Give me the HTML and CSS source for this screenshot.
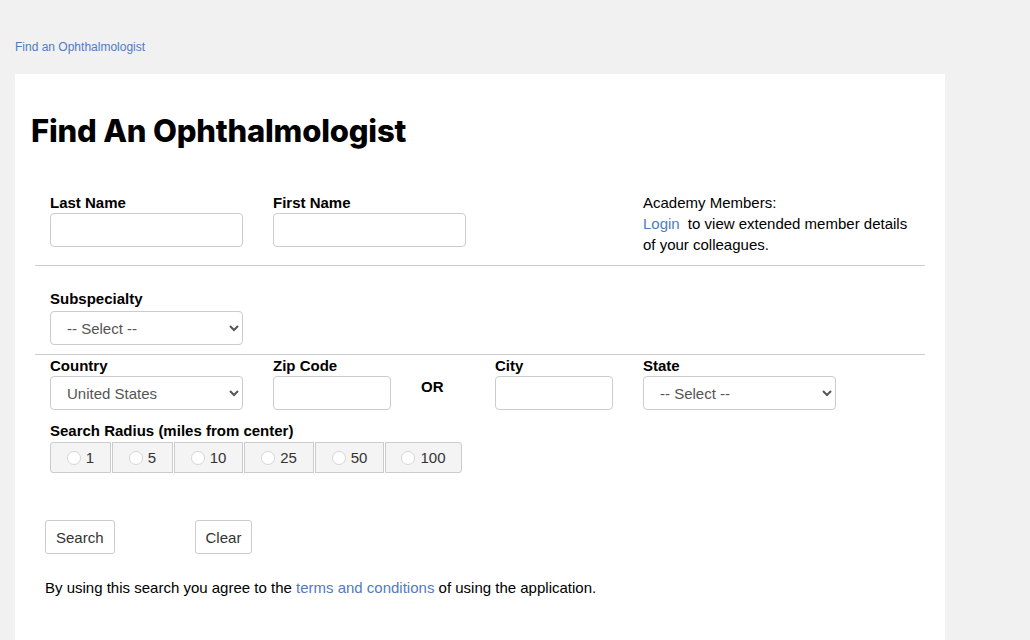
FILE: index.html
```html
<!DOCTYPE html>
<html lang="en">
<head>
    <meta charset="UTF-8">
    <meta name="viewport" content="width=device-width, initial-scale=1.0">
    <title>Find an Ophthalmologist</title>
    <link rel="stylesheet" href="styles.css">
</head>
<body>
    <div class="breadcrumb"><a href="#">Find an Ophthalmologist</a></div>

    <div class="card">
        <h1>Find An Ophthalmologist</h1>

        <form class="search-form">
            <div class="row row-names">
                <div class="field">
                    <label for="last-name">Last Name</label>
                    <input type="text" id="last-name" class="text-input wide">
                </div>
                <div class="field">
                    <label for="first-name">First Name</label>
                    <input type="text" id="first-name" class="text-input wide">
                </div>
                <div class="members">
                    Academy Members:<br>
                    <a href="#" class="login">Login</a> to view extended member details of your colleagues.
                </div>
            </div>

            <div class="row row-sub">
                <div class="field">
                    <label for="subspecialty">Subspecialty</label>
                    <select id="subspecialty" class="select wide">
                        <option>-- Select --</option>
                    </select>
                </div>
            </div>

            <div class="row row-location">
                <div class="field">
                    <label for="country">Country</label>
                    <select id="country" class="select wide">
                        <option>United States</option>
                    </select>
                </div>
                <div class="field">
                    <label for="zip">Zip Code</label>
                    <input type="text" id="zip" class="text-input narrow">
                </div>
                <div class="or">OR</div>
                <div class="field">
                    <label for="city">City</label>
                    <input type="text" id="city" class="text-input narrow">
                </div>
                <div class="field">
                    <label for="state">State</label>
                    <select id="state" class="select wide">
                        <option>-- Select --</option>
                    </select>
                </div>
            </div>

            <div class="radius">
                <div class="radius-label">Search Radius (miles from center)</div>
                <div class="radius-group">
                    <label class="radius-btn r1"><input type="radio" name="radius"> 1</label>
                    <label class="radius-btn r5"><input type="radio" name="radius"> 5</label>
                    <label class="radius-btn r10"><input type="radio" name="radius"> 10</label>
                    <label class="radius-btn r25"><input type="radio" name="radius"> 25</label>
                    <label class="radius-btn r50"><input type="radio" name="radius"> 50</label>
                    <label class="radius-btn r100"><input type="radio" name="radius"> 100</label>
                </div>
            </div>

            <div class="actions">
                <button type="button" class="btn">Search</button>
                <button type="reset" class="btn">Clear</button>
            </div>

            <p class="terms">By using this search you agree to the <a href="#">terms and conditions</a> of using the application.</p>
        </form>
    </div>
</body>
</html>
```

FILE: styles.css
```css
body {
    font-family: "Liberation Sans", Arial, sans-serif;
    background-color: #f1f1f1;
    color: #000;
    margin: 0;
    padding: 40px 0 0 15px;
}
a {
    color: #4f7cc1;
    text-decoration: none;
}
.breadcrumb {
    font-size: 12px;
    line-height: 14px;
    height: 34px;
}
.card {
    background-color: #fff;
    width: 930px;
    min-height: 566px;
    padding-top: 39px;
}
h1 {
    font-family: Inter, "Liberation Sans", sans-serif;
    font-weight: 800;
    font-size: 31px;
    line-height: 36px;
    letter-spacing: -0.2px;
    margin: 0 0 0 16px;
}
.search-form {
    margin-top: 46px;
}
.row {
    display: flex;
    margin: 0 20px;
    padding: 0 15px;
    border-bottom: 1px solid #ccc;
}
.row-names {
    padding-bottom: 10px;
}
.row-sub {
    padding-top: 25px;
    padding-bottom: 9px;
}
.row-sub .select {
    margin-top: 2px;
}
.row-location {
    border-bottom: none;
    padding-top: 3px;
}
.field {
    flex-shrink: 0;
}
.field label, .radius-label {
    display: block;
    font-weight: bold;
    font-size: 15px;
    line-height: 16px;
    margin-bottom: 2px;
}
.row-names .field:first-child, .row-location .field:first-child {
    width: 223px;
}
.row-names .field:nth-child(2) {
    width: 370px;
}
.row-location .field:nth-child(2), .row-location .field:nth-child(4) {
    width: 148px;
}
.text-input, .select {
    box-sizing: border-box;
    height: 34px;
    border: 1px solid #ccc;
    border-radius: 4px;
    background-color: #fff;
    font-family: "Liberation Sans", Arial, sans-serif;
    font-size: 15px;
    color: #555;
}
.select {
    padding-left: 12px;
}
.wide {
    width: 193px;
}
.narrow {
    width: 118px;
}
.members {
    font-size: 15px;
    line-height: 21px;
    width: 267px;
    margin-top: -3px;
}
.login {
    margin-right: 4px;
}
.or {
    width: 74px;
    flex-shrink: 0;
    font-weight: bold;
    font-size: 15px;
    padding-top: 20px;
}
.radius {
    margin: 13px 0 0 35px;
}
.radius-group {
    display: flex;
    margin-top: 3px;
}
.radius-btn {
    box-sizing: border-box;
    display: flex;
    align-items: center;
    justify-content: center;
    height: 31px;
    background-color: #f4f4f4;
    border: 1px solid #ccc;
    margin-right: 1px;
    font-size: 15px;
    color: #333;
}
.radius-btn:first-child {
    border-radius: 3px 0 0 3px;
}
.radius-btn:last-child {
    border-radius: 0 3px 3px 0;
}
.radius-btn input {
    appearance: none;
    width: 14px;
    height: 14px;
    margin: 0 5px 0 0;
    border-radius: 50%;
    background-color: #fff;
    border: 1px solid #d6d6d6;
}
.r1, .r5 { width: 61px; }
.r10 { width: 69px; }
.r25 { width: 70px; }
.r50 { width: 69px; }
.r100 { width: 77px; }
.actions {
    margin: 47px 0 0 30px;
    display: flex;
    gap: 80px;
}
.btn {
    height: 34px;
    padding: 0 10px;
    font-family: "Liberation Sans", Arial, sans-serif;
    font-size: 15px;
    color: #333;
    background-color: #fff;
    border: 1px solid #ccc;
    border-radius: 3px;
}
.terms {
    font-size: 15px;
    line-height: 17px;
    margin: 25px 0 0 30px;
}
```
